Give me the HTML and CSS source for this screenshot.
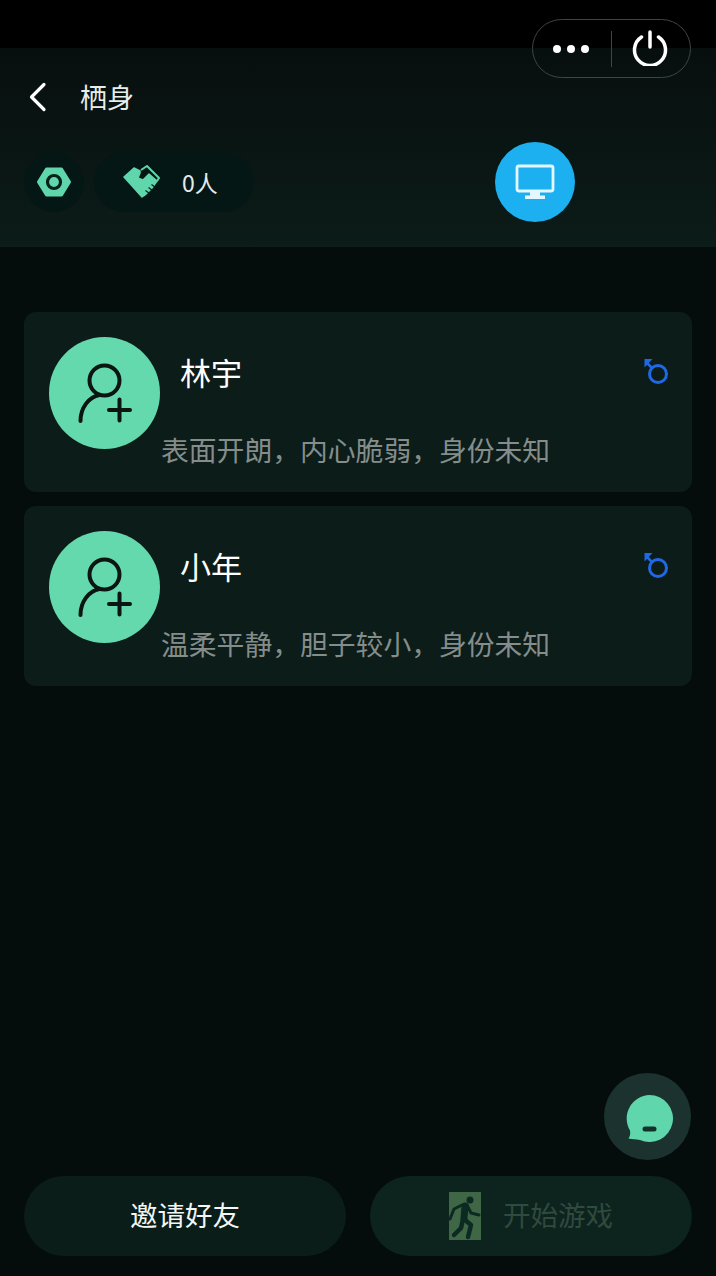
FILE: index.html
```html
<!DOCTYPE html>
<html lang="zh">
<head>
<meta charset="utf-8">
<title>栖身</title>
<link rel="stylesheet" href="styles.css">
</head>
<body>
<div class="page">
  <div class="statusbar"></div>
  <header class="header">
    <div class="titlebar">
      <svg class="back" viewBox="0 0 20 30" width="20" height="30"><path d="M16 2.500 3.500 15 16 27.500" fill="none" stroke="#fff" stroke-width="3.200" stroke-linecap="round" stroke-linejoin="round"/></svg>
      <span class="title">栖身</span>
    </div>
    <div class="toolbar">
      <div class="chip-round">
        <svg viewBox="0 0 36 32" width="36" height="32"><path d="M10.500 3h15L33.500 16l-8 13h-15L2.500 16z" fill="#5fd6ac" stroke="#5fd6ac" stroke-width="3" stroke-linejoin="round"/><circle cx="18" cy="16" r="6.500" fill="none" stroke="#06201b" stroke-width="3.200"/></svg>
      </div>
      <div class="chip-pill">
        <svg viewBox="0 0 38 34" width="38" height="34"><path d="M1 12 11 3l6 3v2l-2 5 5 2 6-6 8 7-5 7-4 4-3 3-3 2z" fill="#5fd6ac" stroke="#5fd6ac" stroke-width="1.500" stroke-linejoin="round"/><path d="M18 5l6-4 12 12-2 3" fill="none" stroke="#5fd6ac" stroke-width="2" stroke-linejoin="round"/><path d="M22.500 25.500l4 3M25.500 22.500l4 3M28.500 19.500l4 3" stroke="#06201b" stroke-width="1.200"/></svg>
        <span class="count">0人</span>
      </div>
      <div class="monitor">
        <svg viewBox="0 0 40 36" width="40" height="36"><rect x="2" y="2" width="36" height="25" rx="2" fill="none" stroke="#e4f7ff" stroke-width="2.800"/><path d="M15 28h10v3.500H15zM10 31.500h20V35H10z" fill="#e4f7ff"/></svg>
      </div>
    </div>
  </header>
  <div class="capsule">
    <div class="dots"><i></i><i></i><i></i></div>
    <div class="divider"></div>
    <svg class="power" viewBox="0 0 36 36" width="36" height="36"><path d="M9.500 7a15.500 15.500 0 1 0 17 0" fill="none" stroke="#fff" stroke-width="3.500" stroke-linecap="round"/><path d="M18 2v15" stroke="#fff" stroke-width="3.500" stroke-linecap="round"/></svg>
  </div>
  <main class="cards">
    <article class="card">
      <div class="card-top">
        <div class="avatar">
          <svg viewBox="0 0 60 60" width="60" height="60"><circle cx="29.500" cy="17.500" r="15" fill="none" stroke="#0b1512" stroke-width="4"/><path d="M5.500 58c0-13 8-24 19-26" fill="none" stroke="#0b1512" stroke-width="4" stroke-linecap="round"/><path d="M34 47h21M44.500 36.500v21" stroke="#0b1512" stroke-width="4" stroke-linecap="round"/></svg>
        </div>
        <h2 class="name">林宇</h2>
        <svg class="gender" viewBox="0 0 26 26" width="26" height="26"><circle cx="16" cy="16" r="8.500" fill="none" stroke="#1f68e6" stroke-width="3"/><path d="M10 10 4 4" stroke="#1f68e6" stroke-width="2.500"/><path d="M2.500 1h8L2.500 9.500z" fill="#1f68e6"/></svg>
      </div>
      <p class="desc">表面开朗，内心脆弱，身份未知</p>
    </article>
    <article class="card">
      <div class="card-top">
        <div class="avatar">
          <svg viewBox="0 0 60 60" width="60" height="60"><circle cx="29.500" cy="17.500" r="15" fill="none" stroke="#0b1512" stroke-width="4"/><path d="M5.500 58c0-13 8-24 19-26" fill="none" stroke="#0b1512" stroke-width="4" stroke-linecap="round"/><path d="M34 47h21M44.500 36.500v21" stroke="#0b1512" stroke-width="4" stroke-linecap="round"/></svg>
        </div>
        <h2 class="name">小年</h2>
        <svg class="gender" viewBox="0 0 26 26" width="26" height="26"><circle cx="16" cy="16" r="8.500" fill="none" stroke="#1f68e6" stroke-width="3"/><path d="M10 10 4 4" stroke="#1f68e6" stroke-width="2.500"/><path d="M2.500 1h8L2.500 9.500z" fill="#1f68e6"/></svg>
      </div>
      <p class="desc">温柔平静，胆子较小，身份未知</p>
    </article>
  </main>
  <div class="chat">
    <svg viewBox="0 0 50 50" width="50" height="50"><path d="M26.500 3a23.500 23.500 0 1 1-9.500 45C13 47 9 47.500 5.500 46.500c1.500-2 2-5 1.500-8A23.500 23.500 0 0 1 26.500 3z" fill="#5fd6ac"/><rect x="19.500" y="34.500" width="14" height="5" rx="2.500" fill="#14302a"/></svg>
  </div>
  <footer class="footer">
    <button class="btn invite">邀请好友</button>
    <button class="btn start">
      <svg viewBox="0 0 32 48" width="32" height="48"><rect width="32" height="48" fill="#3f6746"/><circle cx="21" cy="8" r="3.500" fill="#0c2a22"/><g fill="none" stroke="#0c2a22" stroke-linejoin="round" stroke-linecap="round"><path d="M16 14 15 26" stroke-width="7"/><path d="M18 13l4 8 8 2M13 13 5 17 1 27" stroke-width="3"/><path d="M14 27l-2 9-7 7M15 27l7 6-3 12" stroke-width="4.500"/></g></svg>
      <span>开始游戏</span>
    </button>
  </footer>
</div>
</body>
</html>
```
FILE: styles.css
```css
* { box-sizing: border-box; margin: 0; padding: 0; }
html, body { width: 716px; height: 1276px; overflow: hidden; background: #040d0c; }
body { font-family: "Noto Sans CJK SC", "Liberation Sans", sans-serif; color: #fff; }
.page { position: relative; width: 716px; height: 1276px; display: flex; flex-direction: column; }
.statusbar { height: 48px; background: #000; flex: none; }
.header { height: 199px; flex: none; background: linear-gradient(180deg, #070f0e 0%, #0c1c19 100%); padding: 0 24px; }
.titlebar { height: 100px; display: flex; align-items: center; padding-bottom: 3px; }
.back { margin-left: 4px; }
.title { margin-left: 32px; font-size: 27px; line-height: 36px; color: #e8eeec; }
.toolbar { position: relative; display: flex; align-items: center; gap: 10px; height: 60px; margin-top: 4px; }
.chip-round { width: 60px; height: 60px; border-radius: 50%; background: #051714; display: flex; align-items: center; justify-content: center; }
.chip-pill { width: 160px; height: 60px; border-radius: 30px; background: #051714; display: flex; align-items: center; padding-left: 29px; }
.count { margin-left: 21px; font-size: 23px; color: #e4ecea; }
.monitor { position: absolute; left: 471px; top: -10px; width: 80px; height: 80px; border-radius: 50%; background: #1cb0f1; display: flex; align-items: center; justify-content: center; }
.capsule { position: absolute; left: 532px; top: 19px; width: 159px; height: 59px; border: 1px solid #3c4644; border-radius: 30px; display: flex; align-items: center; }
.dots { display: flex; gap: 6px; margin-left: 20px; width: 36px; }
.dots i { width: 8px; height: 8px; border-radius: 50%; background: #fff; }
.divider { width: 1px; height: 36px; background: #3c4644; margin-left: 22px; }
.power { margin-left: 20px; margin-top: -2px; }
.cards { padding: 65px 24px 0; display: flex; flex-direction: column; gap: 14px; }
.card { height: 180px; background: #0c1c19; border-radius: 12px; padding: 25px 24px 0 25px; }
.card-top { display: flex; align-items: flex-start; height: 112px; }
.avatar { width: 111px; height: 112px; border-radius: 50%; background: #65d9ae; display: flex; align-items: center; justify-content: center; flex: none; }
.name { margin-left: 20px; margin-top: 14px; font-size: 31px; line-height: 42px; font-weight: 400; }
.gender { margin-left: auto; margin-top: 21px; }
.desc { margin-top: -20px; margin-left: 112px; font-size: 27.800px; line-height: 40px; color: #858d8b; white-space: nowrap; }
.chat { position: absolute; left: 604px; top: 1073px; width: 87px; height: 87px; border-radius: 50%; background: #1c322e; display: flex; align-items: center; justify-content: center; }
.footer { position: absolute; left: 24px; right: 24px; top: 1176px; display: flex; gap: 24px; }
.btn { flex: 1; height: 80px; border: none; border-radius: 40px; background: #0a1d19; font-family: inherit; font-size: 27.500px; line-height: 36px; padding-bottom: 4px; display: flex; align-items: center; justify-content: center; }
.invite { color: #f2f6f5; }
.start { color: #2f4a3f; gap: 22px; background: #0d231d; }
.start svg { margin-top: 4px; }
```
